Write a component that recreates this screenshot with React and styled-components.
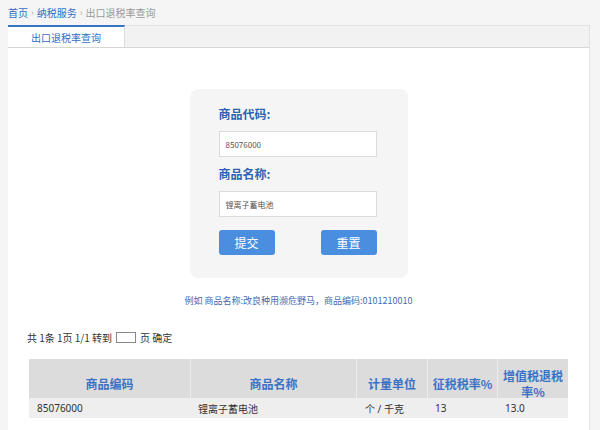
import React from 'react';
import styled, { createGlobalStyle } from 'styled-components';

const GlobalStyle = createGlobalStyle`
  html, body {
    margin: 0;
    padding: 0;
    background: #f5f5f5;
    font-family: "Noto Sans CJK SC", "Noto Sans", sans-serif;
  }
`;

const Page = styled.div`
  width: 600px;
  height: 430px;
  overflow: hidden;
  padding: 0 10px 0 8px;
  box-sizing: border-box;
`;

const Crumbs = styled.div`
  height: 25px;
  display: flex;
  align-items: center;
  gap: 3px;
  font-size: 10px;
  color: #999;
`;

const CrumbLink = styled.span`
  color: #2f6ec8;
`;

const Sep = styled.span`
  color: #aaa;
  font-size: 9px;
`;

const TabBar = styled.div`
  display: flex;
  height: 21px;
  background: #f2f2f2;
  border: 1px solid #e2e2e2;
  border-bottom: 1px solid #d6d6d6;
  border-left: none;
`;

const Tab = styled.div`
  width: 117px;
  margin-top: -1px;
  height: 22px;
  box-sizing: border-box;
  background: #fff;
  border-top: 2px solid #3a74c4;
  border-right: 1px solid #ddd;
  display: flex;
  align-items: center;
  justify-content: center;
  font-size: 10px;
  color: #2f6ec8;
`;

const Panel = styled.div`
  background: #fff;
  height: 400px;
  border-right: 1px solid #e6e6e6;
  display: flex;
  flex-direction: column;
`;

const FormBox = styled.div`
  align-self: center;
  margin-top: 41px;
  width: 218px;
  height: 189px;
  box-sizing: border-box;
  background: #f5f5f5;
  border-radius: 8px;
  padding: 16px 31px 0 29px;
  display: flex;
  flex-direction: column;
`;

const Label = styled.div`
  font-size: 12px;
  font-weight: bold;
  color: #2d63b4;
  height: 18px;
  line-height: 18px;
  margin-bottom: 8px;
`;

const Input = styled.div`
  height: 26px;
  box-sizing: border-box;
  background: #fff;
  border: 1px solid #dcdcdc;
  font-size: 8px;
  color: #555;
  display: flex;
  align-items: center;
  padding-left: 6px;
  margin-bottom: ${p => p.$mb}px;
`;

const Buttons = styled.div`
  display: flex;
  justify-content: space-between;
  margin-top: 13px;
`;

const Button = styled.div`
  width: 56px;
  height: 25px;
  border-radius: 3px;
  background: #4a8ee0;
  color: #fff;
  font-size: 12px;
  display: flex;
  align-items: center;
  justify-content: center;
`;

const Example = styled.div`
  margin-top: 16px;
  text-align: center;
  font-size: 9px;
  color: #4769b0;
`;

const Pager = styled.div`
  margin-top: 23px;
  margin-left: 19px;
  display: flex;
  align-items: center;
  gap: 3px;
  font-size: 10px;
  color: #333;
`;

const PageInput = styled.span`
  display: inline-block;
  width: 18px;
  height: 9px;
  border: 1px solid #888;
  margin: 0 1px;
`;

const Table = styled.div`
  margin: 14px 0 0 21px;
  width: 539px;
  display: grid;
  grid-template-columns: 161px 166px 71px 70px 71px;
`;

const Head = styled.div`
  background: #dcdcdc;
  height: 39px;
  border-left: ${p => (p.$first ? 'none' : '1px solid #ececec')};
  display: flex;
  align-items: center;
  justify-content: center;
  text-align: center;
  font-size: 12px;
  line-height: 16px;
  font-weight: bold;
  color: #3a72c6;
  padding-top: 11px;
  box-sizing: border-box;
`;

const Cell = styled.div`
  background: #eeeeee;
  height: 20px;
  display: flex;
  align-items: center;
  padding-left: ${p => p.$pl || 8}px;
  font-size: 10px;
  color: #333;
  font-family: "Noto Sans", "Noto Sans CJK SC", sans-serif;
`;

const App = () => {
  return (
    <Page>
      <GlobalStyle />
      <Crumbs>
        <CrumbLink>首页</CrumbLink>
        <Sep>›</Sep>
        <CrumbLink>纳税服务</CrumbLink>
        <Sep>›</Sep>
        <span>出口退税率查询</span>
      </Crumbs>
      <TabBar>
        <Tab>出口退税率查询</Tab>
      </TabBar>
      <Panel>
        <FormBox>
          <Label>商品代码:</Label>
          <Input $mb={8}>85076000</Input>
          <Label>商品名称:</Label>
          <Input $mb={0}>锂离子蓄电池</Input>
          <Buttons>
            <Button>提交</Button>
            <Button>重置</Button>
          </Buttons>
        </FormBox>
        <Example>例如 商品名称:改良种用濒危野马，商品编码:0101210010</Example>
        <Pager>
          共 1条 1页 1/1 转到 <PageInput /> 页 确定
        </Pager>
        <Table>
          <Head $first>商品编码</Head>
          <Head>商品名称</Head>
          <Head>计量单位</Head>
          <Head>征税税率%</Head>
          <Head>增值税退税<br />率%</Head>
          <Cell>85076000</Cell>
          <Cell>锂离子蓄电池</Cell>
          <Cell $pl={9}>个 / 千克</Cell>
          <Cell>13</Cell>
          <Cell>13.0</Cell>
        </Table>
      </Panel>
    </Page>
  );
};

export default App;
